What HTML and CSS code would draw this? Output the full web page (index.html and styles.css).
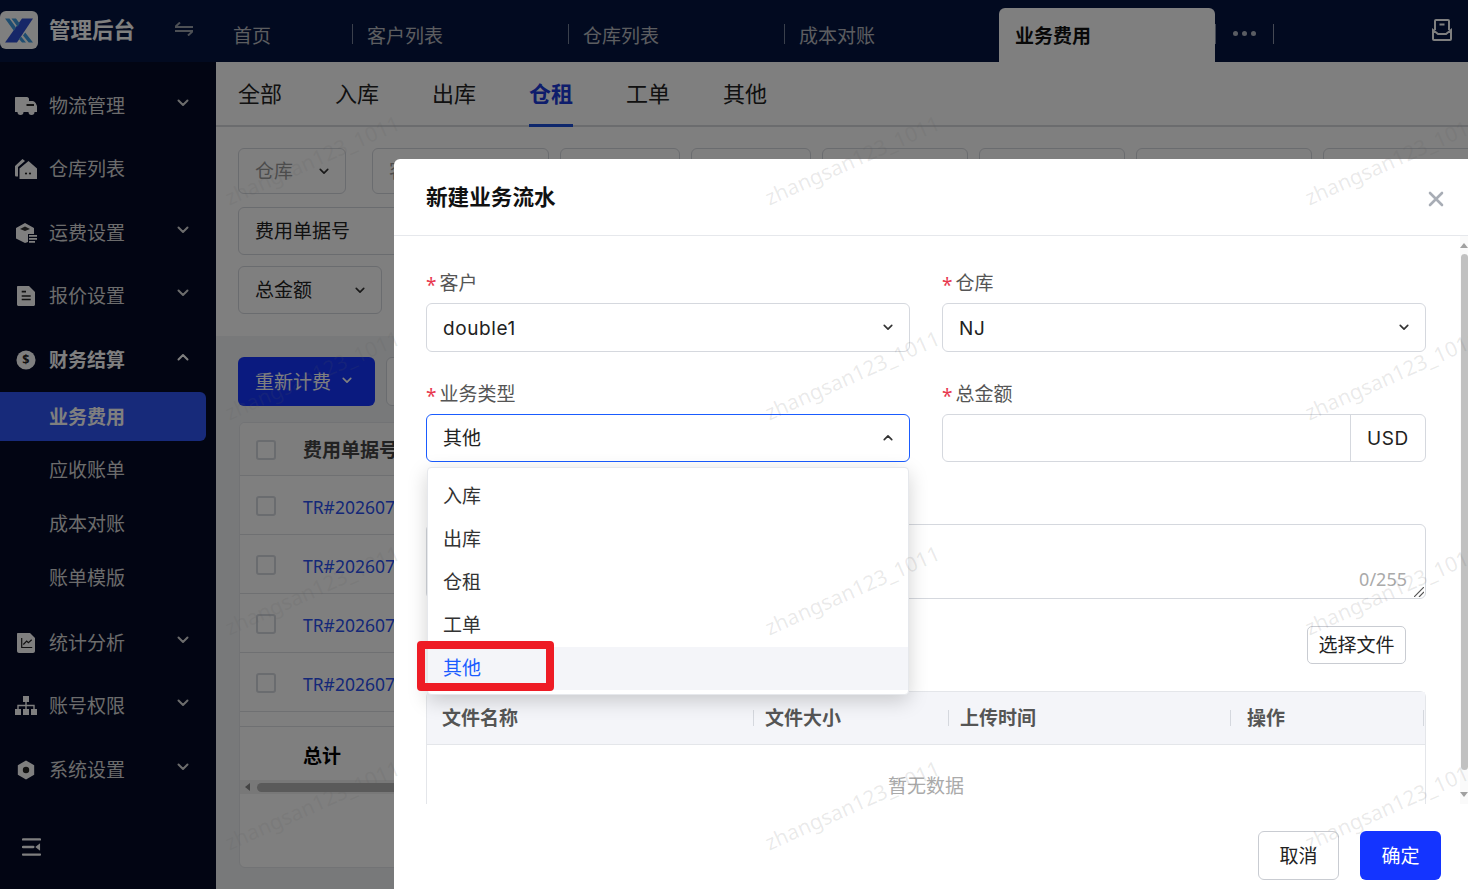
FILE: index.html
```html
<!DOCTYPE html>
<html lang="zh-CN">
<head>
    <meta charset="UTF-8">
    <meta name="viewport" content="width=device-width, initial-scale=1.0">
    <title>管理后台</title>
    <link rel="stylesheet" href="styles.css">
</head>
<body>
    <svg class="defs" width="0" height="0">
        <symbol id="chev-down" viewBox="0 0 12 8"><path d="M1.500 1.500 6 6l4.500-4.500" fill="none" stroke="currentColor" stroke-width="2" stroke-linecap="round" stroke-linejoin="round"/></symbol>
        <symbol id="chev-up" viewBox="0 0 12 8"><path d="M1.500 6.500 6 2l4.500 4.500" fill="none" stroke="currentColor" stroke-width="2" stroke-linecap="round" stroke-linejoin="round"/></symbol>
    </svg>

    <header class="topbar">
        <div class="brand">
            <svg class="logo" viewBox="0 0 38 38">
                <rect width="38" height="38" rx="6" fill="#fff"/>
                <path d="M22 7.500H33L17 31.500H5z" fill="#2f4fd0"/>
                <path d="M5 7.500h4.500l6.500 9-2.200 3.200zM11.500 7.500H16l3.700 5-2.200 3.200z" fill="#3f9be0"/>
                <path d="M25.200 21.500 33 31.500h-4.300l-5.700-7zM21 25.500l5 6h-4l-3-3.500z" fill="#3f9be0"/>
            </svg>
            <span class="brand-name">管理后台</span>
            <svg class="swap" viewBox="0 0 18 14"><path d="M0 5h18M5 0.500 0 5M0 9h18M13 13.500 18 9" fill="none" stroke="#9aa0aa" stroke-width="2"/></svg>
        </div>
        <nav class="tabs">
            <a class="tab tab-first">首页</a>
            <a class="tab">客户列表</a>
            <a class="tab">仓库列表</a>
            <a class="tab tab-nosep">成本对账</a>
            <a class="tab tab-active">业务费用</a>
            <span class="tab-more"><i></i><i></i><i></i></span>
        </nav>
        <svg class="top-icon" viewBox="0 0 20 22"><path d="M3 11V2c0-.6.400-1 1-1h12c.6 0 1 .4 1 1v9M1 11l5 4h8l5-4v9c0 .6-.4 1-1 1H2c-.6 0-1-.4-1-1zM7.500 5.500h5" fill="none" stroke="#fff" stroke-width="2"/></svg>
    </header>

    <div class="layout">
        <aside class="sidebar">
            <div class="menu-item">
                <svg class="menu-icon" viewBox="0 0 22 18"><path d="M1 0h11c1 0 2 1 2 2v2h3.500c1.500 0 2.500 1 3.300 2.300L22 9v6H0V1c0-.6.400-1 1-1z" fill="#fff"/><path d="M11.500 7h7.500v2h-7.500z" fill="#222"/><circle cx="5.500" cy="15" r="3" fill="#fff"/><circle cx="16.500" cy="15" r="3" fill="#fff"/></svg>
                <span>物流管理</span><svg class="chev"><use href="#chev-down"/></svg>
            </div>
            <div class="menu-item">
                <svg class="menu-icon" viewBox="0 0 22 20"><path d="M7.500 0 0 7v9c0 1 .6 1.500 1.500 1.500H3V8l7-6z" fill="#fff"/><path d="M13.500 2 22 9.500V20H4.500V9.500z" fill="#fff"/><circle cx="11" cy="14.500" r="1.100" fill="#222"/><circle cx="15" cy="14.500" r="1.100" fill="#222"/></svg>
                <span>仓库列表</span>
            </div>
            <div class="menu-item">
                <svg class="menu-icon" viewBox="0 0 22 20"><path d="M10 0 19 5v6h-6v8l-3 1-9-4.500V5z" fill="#fff"/><path d="M10 3.500 15 6l-5 2-5-2z" fill="#333"/><path d="M14 12h8v1.700h-8zM14 15h8v1.700h-8zM14 18h6v1.700h-6z" fill="#fff"/></svg>
                <span>运费设置</span><svg class="chev"><use href="#chev-down"/></svg>
            </div>
            <div class="menu-item">
                <svg class="menu-icon" viewBox="0 0 22 20"><path d="M3 0h11l6 6v12.500c0 .8-.7 1.500-1.500 1.500h-15C2.700 20 2 19.300 2 18.500V1c0-.6.400-1 1-1z" fill="#fff"/><path d="M6.700 5.700H11M6.700 10h9M6.700 13.500h9" stroke="#222" stroke-width="1.700"/></svg>
                <span>报价设置</span><svg class="chev"><use href="#chev-down"/></svg>
            </div>
            <div class="menu-item menu-open">
                <svg class="menu-icon" viewBox="0 0 22 22"><circle cx="11" cy="11" r="10.500" fill="#fff"/><text x="11" y="15.500" text-anchor="middle" class="dollar">$</text></svg>
                <span>财务结算</span><svg class="chev"><use href="#chev-up"/></svg>
            </div>
            <div class="submenu">
                <a class="sub-item sub-active">业务费用</a>
                <a class="sub-item">应收账单</a>
                <a class="sub-item">成本对账</a>
                <a class="sub-item">账单模版</a>
            </div>
            <div class="menu-item">
                <svg class="menu-icon" viewBox="0 0 22 20"><path d="M3 0h12l5 5v13c0 1-1 2-2 2H4c-1 0-2-1-2-2V1c0-.6.400-1 1-1z" fill="#fff"/><path d="M6.700 5v9.500h10.500M8.300 11.500 11.700 8l1.700 1.700 3.300-3" fill="none" stroke="#222" stroke-width="1.200"/></svg>
                <span>统计分析</span><svg class="chev"><use href="#chev-down"/></svg>
            </div>
            <div class="menu-item">
                <svg class="menu-icon" viewBox="0 0 22 20"><path d="M8 0h6v6H8zM0 13h6v6H0zM8 13h6v6H8zM16 13h6v6h-6z" fill="#fff"/><path d="M3 13V9.500h16V13M11 6v7" fill="none" stroke="#fff" stroke-width="1.400"/></svg>
                <span>账号权限</span><svg class="chev"><use href="#chev-down"/></svg>
            </div>
            <div class="menu-item">
                <svg class="menu-icon" viewBox="0 0 22 22"><path d="M11 .500 20 5.700v10.600L11 21.500 2 16.300V5.700z" fill="#fff"/><circle cx="11" cy="11" r="3.500" fill="#222"/></svg>
                <span>系统设置</span><svg class="chev"><use href="#chev-down"/></svg>
            </div>
            <svg class="collapse" viewBox="0 0 20 20"><path d="M1 2h18M1 18h18M1 10h11" fill="none" stroke="#fff" stroke-width="2.400" stroke-linecap="round"/><path d="M19 6v8l-5-4z" fill="#fff"/></svg>
        </aside>

        <main class="content">
            <section class="filter-panel">
                <div class="type-tabs">
                    <a>全部</a><a>入库</a><a>出库</a><a class="type-active">仓租</a><a>工单</a><a>其他</a>
                </div>
                <div class="filters">
                    <div class="filter-row">
                        <div class="fbox fbox-ware"><span class="muted">仓库</span><svg class="chev-sm"><use href="#chev-down"/></svg></div>
                        <div class="fbox fbox-cust"><span class="muted">客户</span></div>
                        <div class="fbox w-120"></div>
                        <div class="fbox w-120"></div>
                        <div class="fbox w-146"></div>
                        <div class="fbox w-146"></div>
                        <div class="fbox w-176"></div>
                        <div class="fbox w-176"></div>
                    </div>
                    <div class="filter-row row-48">
                        <div class="fbox w-400"><span>费用单据号</span></div>
                    </div>
                    <div class="filter-row row-48">
                        <div class="fbox fbox-total"><span>总金额</span><svg class="chev-sm"><use href="#chev-down"/></svg></div>
                    </div>
                </div>
            </section>

            <section class="list-area">
                <div class="actions">
                    <button class="btn-primary">重新计费<svg class="chev-sm"><use href="#chev-down"/></svg></button>
                    <button class="btn-plain"></button>
                </div>
                <div class="table-card">
                    <div class="trow thead"><i class="check"></i><span>费用单据号</span></div>
                    <div class="trow"><i class="check"></i><a class="link">TR#20260701</a></div>
                    <div class="trow"><i class="check"></i><a class="link">TR#20260702</a></div>
                    <div class="trow"><i class="check"></i><a class="link">TR#20260703</a></div>
                    <div class="trow trow-last"><i class="check"></i><a class="link">TR#20260704</a></div>
                    <div class="trow tfoot"><span>总计</span></div>
                    <div class="hscroll"><b></b><i></i></div>
                </div>
            </section>
        </main>
    </div>

    <div class="mask"></div>

    <div class="modal">
        <div class="modal-head">
            <h2>新建业务流水</h2>
            <svg class="close" viewBox="0 0 16 16"><path d="M2 2l12 12M14 2 2 14" stroke="#a8adb5" stroke-width="2.600" stroke-linecap="round"/></svg>
        </div>
        <div class="modal-body">
            <div class="form">
                <div class="form-grid">
                    <div class="field">
                        <label><em>*</em>客户</label>
                        <div class="control"><span class="latin">double1</span><svg class="chev-sel"><use href="#chev-down"/></svg></div>
                    </div>
                    <div class="field">
                        <label><em>*</em>仓库</label>
                        <div class="control"><span class="latin">NJ</span><svg class="chev-sel"><use href="#chev-down"/></svg></div>
                    </div>
                    <div class="field">
                        <label><em>*</em>业务类型</label>
                        <div class="control control-focus"><span>其他</span><svg class="chev-sel"><use href="#chev-up"/></svg></div>
                    </div>
                    <div class="field">
                        <label><em>*</em>总金额</label>
                        <div class="control control-group"><div class="group-input"></div><div class="group-addon latin">USD</div></div>
                    </div>
                    <div class="field field-wide">
                        <label></label>
                        <div class="textarea"><span class="count">0/255</span>
                            <svg class="grip" viewBox="0 0 10 10"><path d="M0 10 10 0M5 10l5-5" stroke="#555" stroke-width="1.200"/></svg>
                        </div>
                    </div>
                </div>
                <div class="upload-row"><button class="btn-file">选择文件</button></div>
                <div class="files">
                    <div class="files-head">
                        <span class="col-name">文件名称</span>
                        <span class="col-size">文件大小</span>
                        <span class="col-time">上传时间</span>
                        <span class="col-op">操作</span>
                    </div>
                    <div class="files-empty">暂无数据</div>
                </div>
            </div>
            <div class="scrollbar"><span class="arrow-up"></span><span class="thumb"></span><span class="arrow-down"></span></div>
        </div>
        <div class="modal-foot">
            <button class="btn-cancel">取消</button>
            <button class="btn-ok">确定</button>
        </div>

        <ul class="dropdown">
            <li>入库</li>
            <li>出库</li>
            <li>仓租</li>
            <li>工单</li>
            <li class="opt-active">其他</li>
        </ul>
        <div class="red-mark"></div>
    </div>

    <div class="watermarks">
        <span>zhangsan123_1011</span><span>zhangsan123_1011</span><span>zhangsan123_1011</span>
        <span>zhangsan123_1011</span><span>zhangsan123_1011</span><span>zhangsan123_1011</span>
        <span>zhangsan123_1011</span><span>zhangsan123_1011</span><span>zhangsan123_1011</span>
        <span>zhangsan123_1011</span><span>zhangsan123_1011</span><span>zhangsan123_1011</span>
    </div>
</body>
</html>
```

FILE: styles.css
```css
* {
    box-sizing: border-box;
}
html, body {
    margin: 0;
    height: 100%;
}
body {
    width: 1468px;
    height: 889px;
    overflow: hidden;
    position: relative;
    font-family: "Noto Sans", "Noto Sans CJK SC", sans-serif;
    font-size: 19px;
    line-height: 24px;
    color: #222;
    background: #f0f2f5;
}
.defs {
    position: absolute;
}
a {
    color: inherit;
}
button {
    font: inherit;
    cursor: pointer;
}
.latin {
    font-family: Inter, "Noto Sans", sans-serif;
    font-size: 19px;
    letter-spacing: .6px;
    padding-top: 4px;
}

/* top bar */
.topbar {
    height: 62px;
    display: flex;
    background: #051540;
    color: #d8d8d8;
}
.brand {
    width: 217px;
    display: flex;
    align-items: center;
}
.logo {
    width: 38px;
    height: 38px;
    margin-top: -2px;
    flex: none;
}
.brand-name {
    margin-left: 11px;
    margin-top: -3px;
    font-size: 21.5px;
    font-weight: 700;
    color: #fff;
}
.swap {
    width: 18px;
    height: 14px;
    margin-left: 40px;
    margin-top: -4px;
}
.tabs {
    display: flex;
    align-items: flex-end;
    flex: 1;
}
.tab {
    width: 216px;
    height: 54px;
    padding: 16px 0 0 15px;
    position: relative;
    opacity: .85;
}
.tab-first {
    width: 135px;
    padding-left: 16px;
}
.tab::after {
    content: "";
    position: absolute;
    right: -1px;
    top: 16px;
    height: 20px;
    width: 1px;
    background: #8a93a8;
}
.tab-nosep::after {
    display: none;
}
.tab-nosep {
    width: 215px;
}
.tab-active {
    background: #fff;
    color: #111;
    font-weight: 700;
    border-radius: 6px 6px 0 0;
    padding-left: 16px;
    opacity: 1;
}
.tab-more {
    height: 54px;
    width: 58px;
    display: flex;
    gap: 4px;
    padding: 23px 0 0 18px;
    position: relative;
}
.tab-more i {
    width: 5px;
    height: 5px;
    border-radius: 50%;
    background: #b5bac6;
}
.tab-more::after {
    content: "";
    position: absolute;
    right: -1px;
    top: 16px;
    height: 20px;
    width: 1px;
    background: #8a93a8;
}
.top-icon {
    width: 20px;
    height: 22px;
    margin: 19px 16px 0 0;
}

/* sidebar */
.layout {
    display: flex;
    height: 827px;
}
.sidebar {
    width: 216px;
    flex: none;
    background: #040a26;
    color: #d8d8d8;
    padding-top: 12px;
    position: relative;
}
.menu-item {
    height: 63.500px;
    display: flex;
    align-items: center;
    padding-left: 15px;
}
.menu-item span {
    margin-left: 12px;
    flex: 1;
}
.menu-icon {
    width: 22px;
    height: 20px;
    flex: none;
    color: #fff;
}
.dollar {
    font-size: 14px;
    font-weight: 700;
    fill: #222;
}
.chev {
    width: 12px;
    height: 8px;
    margin-right: 27px;
    margin-top: -6px;
    color: #d8d8d8;
}
.menu-open {
    color: #fff;
    font-weight: 700;
    margin-top: .5px;
}
.menu-open .chev {
    color: #fff;
}
.submenu {
    display: flex;
    flex-direction: column;
    margin-bottom: 4px;
}
.sub-item {
    height: 49px;
    padding: 13px 0 0 49px;
    margin: 0 10px 5px 0;
}
.sub-active {
    background: #2f54f4;
    border-radius: 0 6px 6px 0;
    color: #fff;
    font-weight: 700;
    margin-bottom: 4px;
}
.collapse {
    position: absolute;
    left: 22px;
    top: 775px;
    width: 19px;
    height: 20px;
}

/* page behind the dialog */
.content {
    flex: 1;
    overflow: hidden;
}
.filter-panel {
    background: #fff;
    height: 274px;
}
.type-tabs {
    height: 65px;
    display: flex;
    gap: 53px;
    padding: 18px 0 0 22px;
    border-bottom: 2px solid #d6d8dc;
    font-size: 22px;
    line-height: 26px;
}
.type-tabs a {
    display: block;
    height: 47px;
    width: 44px;
}
.type-active {
    color: #1d3bd8;
    font-weight: 700;
    border-bottom: 3px solid #1d4fd8;
}
.filters {
    padding: 21px 0 0 22px;
}
.filter-row {
    display: flex;
    gap: 11px;
    height: 46px;
    margin-bottom: 13px;
}
.row-48 {
    height: 48px;
    margin-bottom: 11px;
}
.fbox {
    border: 1px solid #d5d8de;
    border-radius: 6px;
    display: flex;
    align-items: center;
    justify-content: space-between;
    padding: 0 16px;
    flex: none;
}
.fbox-ware {
    width: 108px;
    margin-right: 15px;
}
.fbox-cust {
    width: 177px;
}
.w-120 {
    width: 120px;
}
.w-146 {
    width: 146px;
}
.w-176 {
    width: 176px;
}
.w-400 {
    width: 400px;
}
.fbox-total {
    width: 144px;
}
.muted {
    color: #999;
}
.chev-sm {
    width: 10px;
    height: 7px;
    color: #333;
}
.list-area {
    padding: 21px 0 0 22px;
}
.actions {
    display: flex;
    gap: 11px;
    height: 49px;
}
.btn-primary {
    width: 137px;
    border: none;
    border-radius: 6px;
    background: #1434ff;
    color: #fff;
    display: flex;
    align-items: center;
    padding: 0 0 0 17px;
}
.btn-primary .chev-sm {
    color: #fff;
    margin-left: 11px;
    margin-top: -2px;
}
.btn-plain {
    width: 100px;
    background: #fff;
    border: 1px solid #d5d8de;
    border-radius: 6px;
}
.table-card {
    margin-top: 16px;
    margin-left: 1px;
    height: 446px;
    background: #fff;
    border: 1px solid #e4e6ea;
    border-radius: 6px;
    overflow: hidden;
}
.trow {
    height: 59px;
    display: flex;
    align-items: center;
    padding-left: 16px;
    border-bottom: 1px solid #dfe1e5;
}
.thead {
    height: 53px;
    font-weight: 700;
    color: #444;
    background: #fafafa;
}
.thead span {
    margin-top: 2px;
}
.trow-last {
    margin-bottom: 14px;
    border-bottom: 1px solid #dfe1e5;
}
.tfoot {
    height: 54px;
    padding-left: 63px;
    padding-top: 4px;
    border-top: 1px solid #dfe1e5;
    border-bottom: none;
    font-weight: 700;
    color: #000;
}
.check {
    width: 20px;
    height: 20px;
    border: 2px solid #d5d8de;
    border-radius: 3px;
    background: #fff;
    flex: none;
    margin-right: 27px;
    margin-top: 1px;
}
.link {
    color: #2a50f0;
    white-space: nowrap;
    font-size: 17.500px;
    margin-top: 3px;
}
.hscroll {
    height: 14px;
    background: #f1f1f1;
    display: flex;
    align-items: center;
    padding-left: 5px;
}
.hscroll b {
    width: 0;
    height: 0;
    border: 4px solid transparent;
    border-left: 0;
    border-right: 5px solid #888;
}
.hscroll i {
    margin-left: 7px;
    width: 400px;
    height: 9px;
    border-radius: 5px;
    background: #b5b5b5;
}

/* dim layer */
.mask {
    position: absolute;
    inset: 0;
    background: rgba(0, 0, 0, .5);
}

/* dialog */
.modal {
    position: absolute;
    left: 394px;
    top: 159px;
    width: 1074px;
    height: 730px;
    background: #fff;
    border-radius: 6px 0 0 0;
    display: flex;
    flex-direction: column;
}
.modal-head {
    height: 77px;
    flex: none;
    display: flex;
    align-items: center;
    justify-content: space-between;
    padding: 0 24px 0 32px;
    border-bottom: 1px solid #e6e8ec;
}
.modal-head h2 {
    margin: 0;
    font-size: 21.600px;
    font-weight: 700;
    color: #111;
}
.close {
    width: 16px;
    height: 16px;
    margin-top: 4px;
}
.modal-body {
    height: 568px;
    flex: none;
    display: flex;
    overflow: hidden;
}
.form {
    flex: 1;
    padding: 35px 34px 0 32px;
    overflow: hidden;
}
.form-grid {
    display: grid;
    grid-template-columns: 484px 484px;
    column-gap: 32px;
    row-gap: 30px;
}
.field label {
    display: block;
    height: 24px;
    margin-bottom: 8px;
    color: #555;
}
.field em {
    font-style: normal;
    color: #e8384f;
    margin-right: 3px;
    position: relative;
    top: 2px;
}
.field-wide {
    grid-column: 1 / 3;
}
.control {
    height: 48.500px;
    border: 1px solid #d5d8de;
    border-radius: 6px;
    display: flex;
    align-items: center;
    justify-content: space-between;
    padding: 0 16px;
}
.control-focus {
    border-color: #1a5cff;
}
.control-group {
    padding: 0;
    align-items: stretch;
}
.group-input {
    flex: 1;
}
.group-addon {
    width: 75px;
    border-left: 1px solid #d5d8de;
    display: flex;
    align-items: center;
    justify-content: center;
    padding-top: 2px;
}
.chev-sel {
    width: 10px;
    height: 7px;
    color: #333;
}
.textarea {
    height: 75px;
    border: 1px solid #d5d8de;
    border-radius: 6px;
    position: relative;
}
.count {
    position: absolute;
    right: 18px;
    bottom: 7px;
    font-size: 18px;
    color: #aaa;
}
.grip {
    position: absolute;
    right: 1px;
    bottom: 1px;
    width: 10px;
    height: 10px;
}
.upload-row {
    display: flex;
    justify-content: flex-end;
    height: 38px;
    margin-top: 27px;
    padding-right: 20px;
}
.btn-file {
    width: 99px;
    background: #fff;
    border: 1px solid #c9ccd2;
    border-radius: 5px;
    padding: 0;
    color: #222;
}
.files {
    margin-top: 27px;
    border: 1px solid #e4e6ea;
    border-bottom: none;
    border-radius: 6px 6px 0 0;
    height: 130px;
}
.files-head {
    height: 53px;
    display: flex;
    align-items: center;
    background: #f4f5f9;
    border-bottom: 1px solid #e4e6ea;
    font-weight: 700;
    color: #555;
}
.files-head span {
    height: 16px;
    line-height: 16px;
    padding-left: 11px;
    border-left: 1px solid #d5d8de;
}
.files-head .col-name {
    width: 326px;
    padding-left: 15px;
    border-left: none;
}
.col-size {
    width: 195px;
}
.col-time {
    width: 282px;
}
.files-head .col-op {
    width: 194px;
    padding-left: 16px;
    border-right: 1px solid #d5d8de;
}
.files-empty {
    text-align: center;
    padding-top: 29px;
    color: #aaa;
}
.scrollbar {
    width: 8px;
    flex: none;
    background: #fafafa;
    display: flex;
    flex-direction: column;
    align-items: center;
    padding: 7px 0;
}
.arrow-up {
    border: 4px solid transparent;
    border-top: 0;
    border-bottom: 5px solid #a0a0a0;
}
.arrow-down {
    border: 4px solid transparent;
    border-bottom: 0;
    border-top: 5px solid #a0a0a0;
    margin-top: 22px;
}
.thumb {
    width: 7px;
    height: 516px;
    margin-top: 6px;
    background: #c1c1c1;
    border-radius: 4px;
}
.modal-foot {
    flex: 1;
    display: flex;
    justify-content: flex-end;
    gap: 21px;
    padding: 27px 27px 0 0;
}
.modal-foot button {
    width: 81px;
    height: 49px;
    border-radius: 6px;
    padding: 0;
}
.btn-cancel {
    background: #fff;
    border: 1px solid #c9ccd2;
    color: #222;
}
.btn-ok {
    background: #1434ff;
    border: none;
    color: #fff;
}

/* open select list, lies over the form */
.dropdown {
    position: absolute;
    left: 33px;
    top: 308px;
    width: 482px;
    height: 228px;
    margin: 0;
    padding: 7px 0 0;
    list-style: none;
    background: #fff;
    border: 1px solid #e6e8ec;
    border-radius: 4px;
    box-shadow: 0 6px 20px rgba(0, 0, 0, .18);
}
.dropdown li {
    height: 43px;
    line-height: 43px;
    padding-left: 15px;
    color: #333;
}
.dropdown .opt-active {
    background: #f4f5f9;
    color: #1a5cff;
}
.red-mark {
    position: absolute;
    left: 23px;
    top: 482px;
    width: 137px;
    height: 50px;
    border: 8px solid #ee1c25;
    border-radius: 4px;
}

/* watermark layer */
.watermarks {
    position: absolute;
    inset: 0;
    padding: 52px 0 0 42px;
    display: grid;
    grid-template-columns: repeat(3, 540px);
    grid-auto-rows: 215px;
    pointer-events: none;
    overflow: hidden;
}
.watermarks span {
    display: flex;
    align-items: center;
    justify-content: center;
    transform: rotate(-24deg);
    font-size: 21px;
    color: rgba(90, 90, 90, .13);
}
```
